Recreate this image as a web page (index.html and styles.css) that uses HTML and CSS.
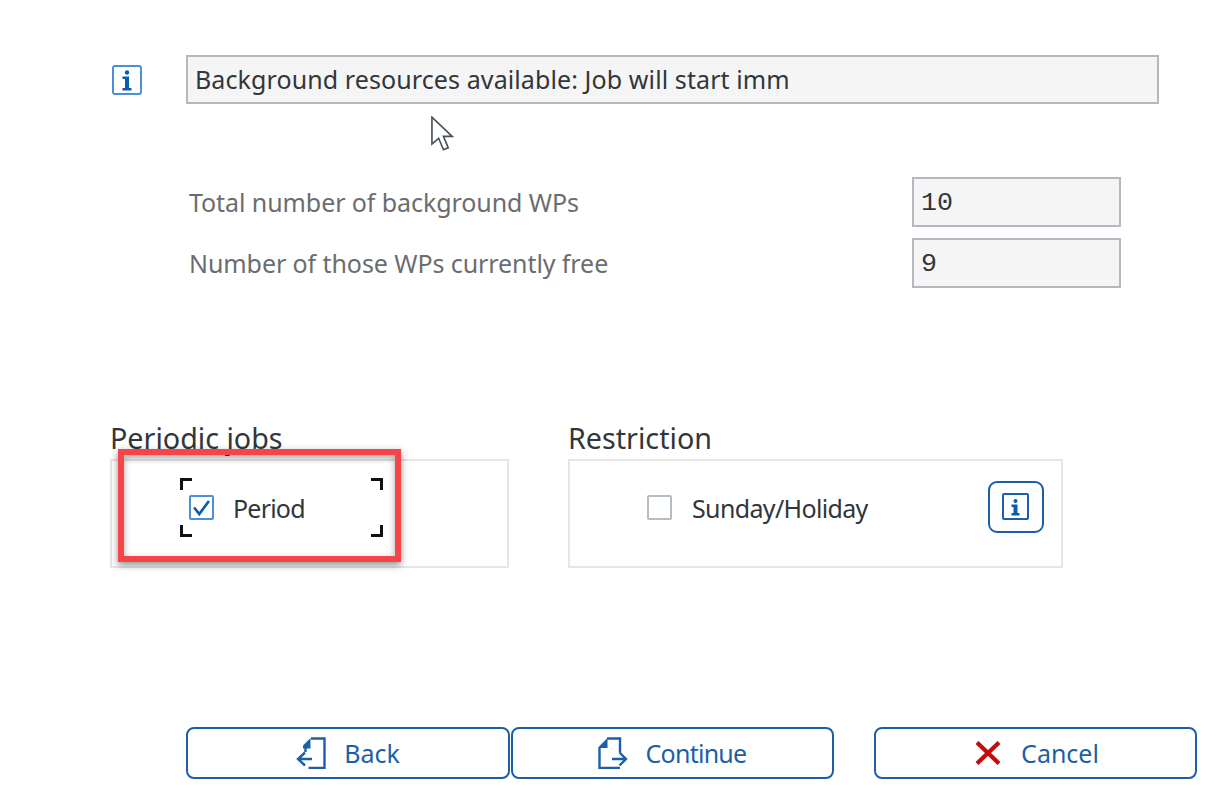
FILE: index.html

```html
<!DOCTYPE html>
<html lang="en">
<head>
  <meta charset="UTF-8" />
  <meta name="viewport" content="width=device-width, initial-scale=1.0"/>
  <title>Background job start</title>
  <link rel="stylesheet" href="styles.css">
</head>
<body>
  <div class="message-row">
    <svg class="info-small" viewBox="0 0 30 30">
      <rect x="1" y="1" width="28" height="28" rx="2" fill="none" stroke="#4a90d9" stroke-width="2"/>
      <circle cx="15" cy="7.500" r="2.200" fill="#0b5cab"/>
      <path d="M10.500 11.500h6.500v11.500h2.500v2.500h-9v-2.500h2.500v-9h-2.500z" fill="#0b5cab"/>
    </svg>
    <div class="message">Background resources available: Job will start imm</div>
  </div>

  <svg class="cursor" viewBox="0 0 24 36">
    <path d="M1 1v28l7-6 5 12 5-2-5-12h9z" fill="#fff" stroke="#4a5056" stroke-width="1.700"/>
  </svg>

  <div class="stats">
    <div class="stat-row">
      <span class="stat-label">Total number of background WPs</span>
      <div class="stat-value">10</div>
    </div>
    <div class="stat-row">
      <span class="stat-label">Number of those WPs currently free</span>
      <div class="stat-value">9</div>
    </div>
  </div>

  <div class="groups">
    <section class="group group-periodic">
      <h2>Periodic jobs</h2>
      <div class="group-box">
        <div class="focus-area">
          <span class="corner tl"></span><span class="corner tr"></span>
          <span class="corner bl"></span><span class="corner br"></span>
          <span class="checkbox checked">
            <svg viewBox="0 0 24 24"><path d="M3.500 12l6 7.500 11-15" fill="none" stroke="#0b5cab" stroke-width="3"/></svg>
          </span>
          <span class="check-label label-period">Period</span>
        </div>
      </div>
      <div class="annotation"></div>
    </section>

    <section class="group group-restriction">
      <h2>Restriction</h2>
      <div class="group-box">
        <div class="check-row">
          <span class="checkbox"></span>
          <span class="check-label label-sunday">Sunday/Holiday</span>
        </div>
        <button class="info-btn" type="button">
          <svg viewBox="0 0 28 28">
            <rect x="1" y="1" width="25" height="25" rx="1" fill="none" stroke="#1b5fa8" stroke-width="2"/>
            <circle cx="13.500" cy="8" r="2" fill="#0b5cab"/>
            <path d="M9.500 11.500h6v8.500h2v2.500h-8v-2.500h2v-6h-2z" fill="#0b5cab"/>
          </svg>
        </button>
      </div>
    </section>
  </div>

  <div class="actions">
    <button class="btn btn-back" type="button">
      <svg viewBox="0 0 30 32">
        <path d="M15 1.500h13.500v29.500h-16" fill="none" stroke="#1b5fa8" stroke-width="2.400"/>
        <path d="M14.500 1L7 8.500v3h7.500z" fill="#1b5fa8"/>
        <path d="M16 22H2M9 15.500L2 22l7 6.500" fill="none" stroke="#1b5fa8" stroke-width="2.400"/>
        <path d="M9.500 11v4" fill="none" stroke="#1b5fa8" stroke-width="2.400"/>
      </svg>
      Back
    </button>
    <button class="btn btn-continue" type="button">
      <svg viewBox="0 0 30 32">
        <path d="M9 1.500h13v14M22 31H1.500V10" fill="none" stroke="#1b5fa8" stroke-width="2.400"/>
        <path d="M9.500 1L1 9.500v1.500h8.500z" fill="#1b5fa8"/>
        <path d="M14 22h14M21.500 15.500L28 22l-6.500 6.500" fill="none" stroke="#1b5fa8" stroke-width="2.400"/>
      </svg>
      Continue
    </button>
    <button class="btn btn-cancel" type="button">
      <svg viewBox="0 0 26 24">
        <path d="M2 1.500L24 22.500M24 1.500L2 22.500" fill="none" stroke="#c40a0a" stroke-width="4.200"/>
      </svg>
      Cancel
    </button>
  </div>
</body>
</html>
```

FILE: styles.css

```css
body {
  margin: 0;
  position: relative;
  height: 789px;
  overflow: hidden;
  background-color: #ffffff;
  color: #32363a;
  font-family: 'Noto Sans', sans-serif;
  font-size: 25px;
}
.message-row {
  display: flex;
  align-items: center;
  padding: 55px 0 0 112px;
}
.info-small {
  width: 30px;
  height: 30px;
  margin-right: 44px;
}
.message {
  box-sizing: border-box;
  width: 973px;
  height: 49px;
  padding-left: 7px;
  line-height: 45px;
  letter-spacing: 0.1px;
  background-color: #f5f5f5;
  border: 2px solid #b4b9bf;
}
.cursor {
  position: absolute;
  left: 431px;
  top: 116px;
  width: 23px;
  height: 35px;
}
.stats {
  width: 932px;
  margin: 73px 0 0 189px;
  display: flex;
  flex-direction: column;
  gap: 11px;
}
.stat-row {
  display: flex;
  align-items: center;
  justify-content: space-between;
}
.stat-label {
  color: #6a6d70;
  letter-spacing: -0.08px;
}
.stat-value {
  box-sizing: border-box;
  width: 209px;
  height: 50px;
  padding-left: 7px;
  line-height: 49px;
  font-family: 'Liberation Mono', monospace;
  font-size: 26.670px;
  background-color: #f5f5f5;
  border: 2px solid #b4b9bf;
}
.groups {
  display: flex;
  gap: 59px;
  margin: 133px 0 0 110px;
}
.group {
  position: relative;
}
.group h2 {
  margin: 0;
  height: 38px;
  line-height: 33px;
  font-size: 28.700px;
  font-weight: 400;
}
.group-box {
  box-sizing: border-box;
  height: 109px;
  border: 2px solid #e6e6e6;
  display: flex;
  align-items: flex-start;
  padding-top: 17px;
}
.group-periodic .group-box {
  width: 399px;
  padding-left: 68px;
}
.group-restriction .group-box {
  width: 495px;
  padding-left: 77px;
  padding-right: 17px;
}
.focus-area {
  position: relative;
  box-sizing: border-box;
  width: 203px;
  height: 59px;
  padding-left: 9px;
  display: flex;
  align-items: center;
}
.corner {
  position: absolute;
  width: 9px;
  height: 9px;
  border: 0 solid #111;
}
.tl { left: 0; top: 0; border-width: 3px 0 0 3px; }
.tr { right: 0; top: 0; border-width: 3px 3px 0 0; }
.bl { left: 0; bottom: 0; border-width: 0 0 3px 3px; }
.br { right: 0; bottom: 0; border-width: 0 3px 3px 0; }
.check-row {
  height: 59px;
  display: flex;
  align-items: center;
}
.checkbox {
  box-sizing: border-box;
  width: 25px;
  height: 25px;
  margin-right: 19px;
  border: 2px solid #b5bcc4;
  border-radius: 2px;
  display: flex;
  align-items: center;
  justify-content: center;
}
.check-row .checkbox {
  margin-right: 20px;
}
.checkbox.checked {
  border-color: #4a90d9;
}
.checkbox svg {
  width: 21px;
  height: 21px;
}
.label-period {
  letter-spacing: -0.8px;
}
.label-sunday {
  letter-spacing: -0.65px;
}
.info-btn {
  box-sizing: border-box;
  width: 56px;
  height: 52px;
  margin: 3px 0 0 auto;
  padding: 0;
  background: #ffffff;
  border: 2px solid #1b5fa8;
  border-radius: 9px;
  display: flex;
  align-items: center;
  justify-content: center;
}
.info-btn svg {
  width: 28px;
  height: 28px;
}
.annotation {
  position: absolute;
  left: 8px;
  top: 28px;
  box-sizing: border-box;
  width: 283px;
  height: 113px;
  border: 6px solid #f5444a;
  box-shadow: 0 3px 7px rgba(0, 0, 0, 0.45), inset 0 3px 7px rgba(0, 0, 0, 0.35);
}
.actions {
  display: flex;
  margin: 159px 0 0 186px;
}
.btn {
  box-sizing: border-box;
  height: 52px;
  width: 323px;
  padding: 0;
  background: #ffffff;
  color: #1b5fa8;
  font-family: inherit;
  font-size: 25px;
  border: 2px solid #1b5fa8;
  border-radius: 8px;
  display: flex;
  align-items: center;
  justify-content: center;
  gap: 18px;
}
.btn svg {
  width: 30px;
  height: 32px;
}
.btn-back {
  width: 324px;
  margin-right: 1px;
}
.btn-continue {
  gap: 18px;
  padding-right: 1px;
  letter-spacing: -0.75px;
}
.btn-cancel {
  margin-left: 40px;
  padding-left: 3px;
  gap: 20px;
}
.btn-cancel svg {
  width: 26px;
  height: 24px;
}
```
